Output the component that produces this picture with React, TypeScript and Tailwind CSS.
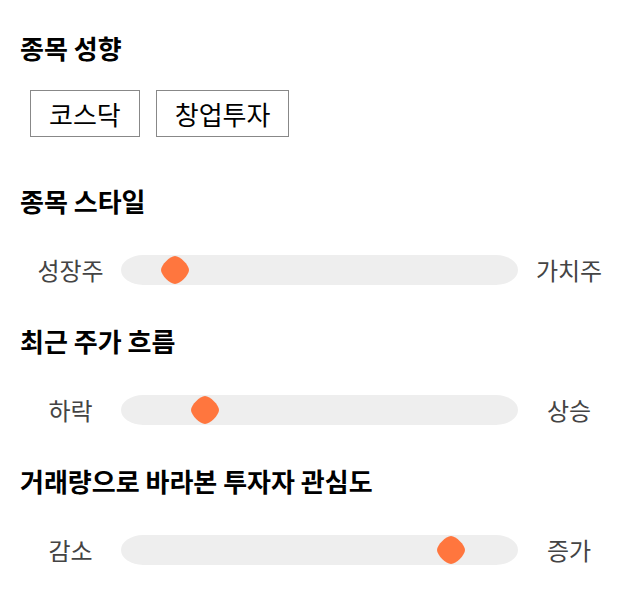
const font = { fontFamily: '"Noto Sans CJK KR", "Noto Sans", sans-serif' };

type SliderRow = { left: string; right: string; thumb: number };

function Thumb({ x }: { x: number }) {
  return (
    <svg
      width="30"
      height="30"
      viewBox="0 0 30 30"
      className="absolute top-0"
      style={{ left: x - 15 }}
    >
      <path
        d="M15 1 C20 1 29 10 29 15 C29 20 20 29 15 29 C10 29 1 20 1 15 C1 10 10 1 15 1Z"
        fill="#ff763e"
      />
    </svg>
  );
}

function Slider({ row }: { row: SliderRow }) {
  return (
    <div className="flex h-[30px] items-center">
      <div className="w-[101px] text-center text-[24px] leading-[30px] text-[#444]">
        {row.left}
      </div>
      <div className="relative h-[30px] w-[397px] rounded-[22px/15px] bg-[#eeeeee]">
        <Thumb x={row.thumb} />
      </div>
      <div className="w-[102px] text-center text-[24px] leading-[30px] text-[#444]">
        {row.right}
      </div>
    </div>
  );
}

function Title({ children }: { children: string }) {
  return <h2 className="text-[26px] font-bold leading-[32px] text-black">{children}</h2>;
}

export default function App() {
  const sliders: { title: string; row: SliderRow }[] = [
    { title: "종목 스타일", row: { left: "성장주", right: "가치주", thumb: 54 } },
    { title: "최근 주가 흐름", row: { left: "하락", right: "상승", thumb: 84 } },
    {
      title: "거래량으로 바라본 투자자 관심도",
      row: { left: "감소", right: "증가", thumb: 330 },
    },
  ];

  return (
    <div className="min-h-[606px] w-[640px] bg-white px-5 pt-8" style={font}>
      <Title>종목 성향</Title>
      <div className="ml-[10px] mt-[26px] flex gap-4">
        {["코스닥", "창업투자"].map((t) => (
          <button
            key={t}
            className="h-[47px] border border-[#888] bg-white px-[18px] text-[26px] leading-none text-black"
          >
            {t}
          </button>
        ))}
      </div>
      {sliders.map((s, i) => (
        <div key={s.title} className={i === 0 ? "mt-12" : "mt-10"}>
          <Title>{s.title}</Title>
          <div className="mt-[38px]">
            <Slider row={s.row} />
          </div>
        </div>
      ))}
    </div>
  );
}
